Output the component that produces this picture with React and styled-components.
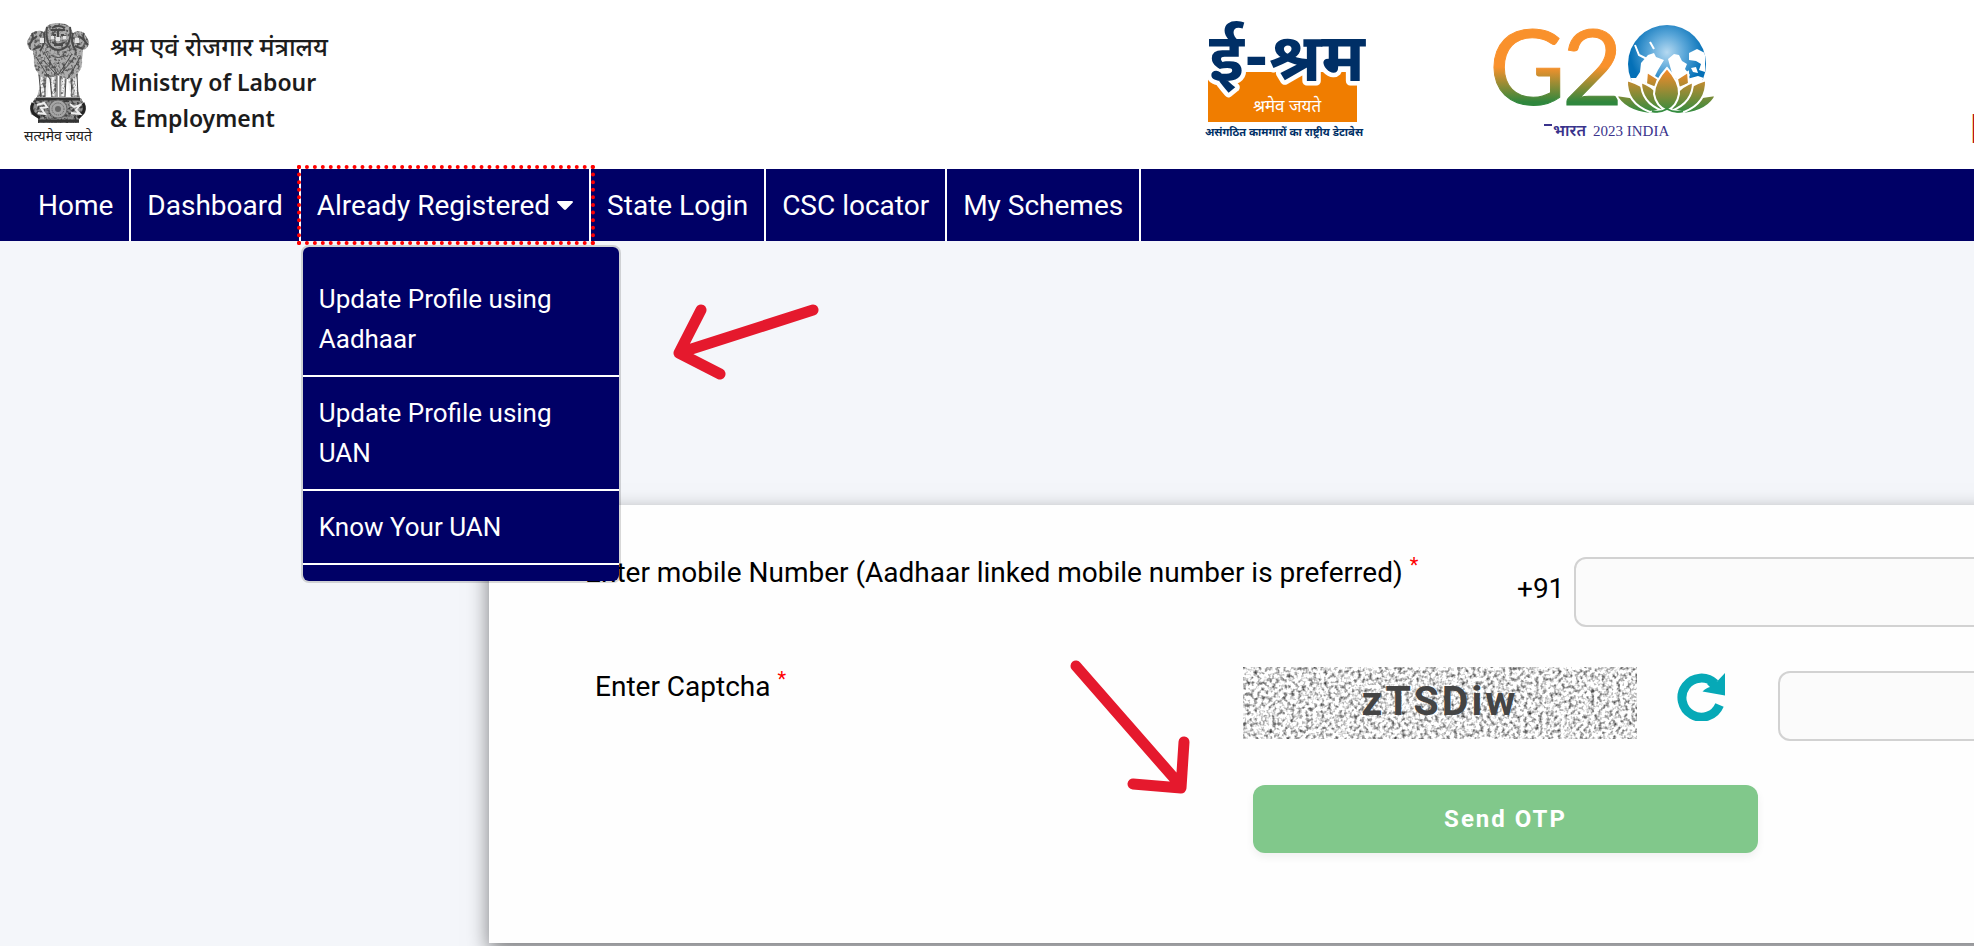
import React, { useState } from "react";
import styled, { createGlobalStyle } from "styled-components";

const App = () => {
	const [mobile, setMobile] = useState("");
	const [captcha, setCaptcha] = useState("");

	return (
		<Page>
			<GlobalStyle />
			<Header>
				<Brand>
					<Emblem />
					<BrandText>
						<BrandHindi lang="hi">श्रम एवं रोजगार मंत्रालय</BrandHindi>
						<BrandName>Ministry of Labour</BrandName>
						<BrandName>& Employment</BrandName>
					</BrandText>
				</Brand>
				<Logos>
					<EShramLogo />
					<G20Logo />
				</Logos>
				<NextLogo />
			</Header>

			<Nav>
				<NavItem>
					<NavLink href="#home">Home</NavLink>
				</NavItem>
				<NavItem>
					<NavLink href="#dashboard">Dashboard</NavLink>
				</NavItem>
				<NavItem $focused>
					<NavLink href="#registered">
						Already Registered
						<Caret viewBox="0 0 16 9" aria-hidden="true">
							<path d="M1.2 0h13.6c1 0 1.5 1.1.8 1.8L9 8.5c-.6.6-1.4.6-2 0L.4 1.8C-.3 1.1.2 0 1.2 0z" />
						</Caret>
					</NavLink>
					<Menu>
						<MenuLink href="#aadhaar">Update Profile using Aadhaar</MenuLink>
						<MenuLink href="#uan">Update Profile using UAN</MenuLink>
						<MenuLink href="#know">Know Your UAN</MenuLink>
					</Menu>
				</NavItem>
				<NavItem>
					<NavLink href="#state">State Login</NavLink>
				</NavItem>
				<NavItem>
					<NavLink href="#csc">CSC locator</NavLink>
				</NavItem>
				<NavItem>
					<NavLink href="#schemes">My Schemes</NavLink>
				</NavItem>
			</Nav>

			<Card onSubmit={(e) => e.preventDefault()}>
				<MobileRow>
					<Label htmlFor="mobile">
						Enter mobile Number (Aadhaar linked mobile number is preferred){" "}
						<Required>*</Required>
					</Label>
					<Prefix>+91</Prefix>
					<Input
						id="mobile"
						type="tel"
						value={mobile}
						onChange={(e) => setMobile(e.target.value)}
					/>
				</MobileRow>
				<CaptchaRow>
					<Label htmlFor="captcha">
						Enter Captcha <Required>*</Required>
					</Label>
					<CaptchaImage>
						<Noise />
						<CaptchaText>zTSDiw</CaptchaText>
					</CaptchaImage>
					<RefreshButton type="button" aria-label="Refresh captcha">
						<svg viewBox="0 0 48 48" width="48" height="48">
							<path
								d="M42.500 32A19.500 19.500 0 1 1 38 10.600"
								fill="none"
								stroke="#06a9b7"
								strokeWidth="9"
							/>
							<path
								d="M48 0V22.500L25.500 18.500C28 16 31 14.500 33 14L30 11L38 7.500L40 8.500Z"
								fill="#06a9b7"
							/>
						</svg>
					</RefreshButton>
					<Input
						id="captcha"
						type="text"
						value={captcha}
						onChange={(e) => setCaptcha(e.target.value)}
					/>
				</CaptchaRow>
				<SendButton type="submit">Send OTP</SendButton>
			</Card>

			<MenuArrow viewBox="0 0 160 90" aria-hidden="true">
				<path d="M141 18L7 61M29 18L7 61L48 82" />
			</MenuArrow>
			<ButtonArrow viewBox="0 0 130 150" aria-hidden="true">
				<path d="M16 16L121 136M124 92L121 138L73 134" />
			</ButtonArrow>
		</Page>
	);
};

export default App;

const Emblem = () => (
	<LogoSvg width="70" height="121" viewBox="0 0 70 121" aria-hidden="true">
		<defs>
			<filter id="grain" x="0" y="0" width="100%" height="100%">
				<feTurbulence type="fractalNoise" baseFrequency="0.35" numOctaves="2" seed="4" />
				<feColorMatrix values="0 0 0 0 0  0 0 0 0 0  0 0 0 0 0  4 0 0 0 -1.800" />
				<feComposite in2="SourceGraphic" operator="in" />
			</filter>
			<path
				id="lions"
				d="M24 3Q28 0 35 0Q43 0 47 4L50 10Q55 6 61 10L66 18Q66 26 60 27L59 36Q60 44 55 50L52 60L57 74H48L45 54L43 56L42 74H38L37 53H34L33 74H28L27 56L24 54L22 74H14L18 60L15 50Q10 44 11 36L10 28Q4 26 4 18L9 10Q15 6 21 9Z"
			/>
			<path
				id="abacus"
				d="M12 75H58L60 79Q64 84 62 90L56 95V100H15V95L8 91Q6 84 10 79Z"
			/>
		</defs>
		<use href="#lions" fill="#adadad" />
		<path
			d="M18 54L20 72M25 56L23 73M30 54V73M40 54V73M46 55L49 73M51 54L53 72"
			stroke="#f3f3f3"
			strokeWidth="3"
		/>
		<use href="#lions" fill="#000" filter="url(#grain)" opacity="0.5" />
		<g fill="none" stroke="#4a4a4a">
			<path
				d="M24 4Q22 15 27 23Q35 31 44 23Q49 14 47 4M28 7H42M29 5Q35 1 42 5M30 12H33M38 12H41M35 8V17M29 19Q35 24 42 19M31 22H40"
				strokeWidth="2"
			/>
			<path
				d="M21 10Q23 20 17 28M9 10Q12 15 6 22M14 13L8 18M11 26L18 23M50 10Q47 20 53 28M61 10Q58 15 65 22M56 13L62 18M60 26L52 23"
				strokeWidth="2"
			/>
			<path d="M13 34Q23 50 27 56M57 34Q49 50 44 56M22 31Q29 42 35 52Q42 42 49 31M20 37L31 49M50 37L39 49M28 32Q35 37 43 32" />
			<path d="M16 52L18 74M22 55V74M27 56L29 74M34 53V74M37 53V74M43 56L42 74M48 55L49 74M54 51L55 74" />
		</g>
		<path
			d="M33 14h4v4h-4zM28 13h3v3h-3zM40 13h3v3h-3zM17 15h4v5h-4zM52 15h4v5h-4z"
			fill="#e6e6e6"
		/>
		<use href="#abacus" fill="#909090" />
		<use href="#abacus" fill="#000" filter="url(#grain)" opacity="0.6" />
		<path d="M13 76H57M15 98H56" stroke="#333" strokeWidth="3" />
		<path
			d="M10 80Q7 86 11 91L17 95M60 80Q63 86 59 91L55 95"
			fill="none"
			stroke="#222"
			strokeWidth="3"
		/>
		<path
			d="M14 82L21 80L24 84L18 85L22 91L15 90M47 81L51 84L57 82L53 87L57 91L48 90"
			fill="none"
			stroke="#eee"
			strokeWidth="2"
		/>
		<circle cx="35" cy="86" r="9" fill="#a5a5a5" stroke="#666" />
		<circle cx="35" cy="86" r="6" fill="none" stroke="#555" strokeDasharray="1 1" />
		<circle cx="35" cy="86" r="3" fill="#666" />
		<text x="35" y="118" textAnchor="middle" fontSize="14" fill="#222">
			सत्यमेव जयते
		</text>
	</LogoSvg>
);

const EShramLogo = () => (
	<LogoSvg width="158" height="122" viewBox="0 0 158 122" aria-hidden="true">
		<rect y="54" width="149" height="50" fill="#f07d00" />
		<text
			x="1"
			y="63"
			fontSize="67"
			fontWeight="700"
			fill="#002f66"
			stroke="#fff"
			strokeWidth="9"
			strokeLinejoin="round"
			paintOrder="stroke"
		>
			ई-श्रम
		</text>
		<text x="79" y="94" textAnchor="middle" fontSize="17" fill="#fff">
			श्रमेव जयते
		</text>
		<text x="76" y="118" textAnchor="middle" fontSize="11" fontWeight="700" fill="#002f66">
			असंगठित कामगारों का राष्ट्रीय डेटाबेस
		</text>
	</LogoSvg>
);

const G20Logo = () => (
	<LogoSvg width="224" height="122" viewBox="0 0 224 122" aria-hidden="true">
		<defs>
			<linearGradient
				id="tricolor"
				gradientUnits="userSpaceOnUse"
				x1="0"
				y1="10"
				x2="0"
				y2="88"
			>
				<stop offset="0.5" stopColor="#f9912c" />
				<stop offset="0.950" stopColor="#2f873d" />
			</linearGradient>
			<linearGradient id="petal" gradientUnits="userSpaceOnUse" x1="0" y1="48" x2="0" y2="94">
				<stop offset="0.100" stopColor="#f58a2b" />
				<stop offset="1" stopColor="#348c3f" />
			</linearGradient>
			<radialGradient id="ocean" cx="0.5" cy="0.350" r="0.5">
				<stop offset="0" stopColor="#b5d9f1" />
				<stop offset="0.450" stopColor="#5ba7d9" />
				<stop offset="0.950" stopColor="#0470b7" />
			</radialGradient>
			<clipPath id="globe">
				<circle cx="175" cy="46" r="39" />
			</clipPath>
		</defs>
		<g
			fontFamily="Lato, sans-serif"
			fontSize="105"
			fill="url(#tricolor)"
			stroke="url(#tricolor)"
			strokeWidth="1"
		>
			<text x="-3" y="87">
				G
			</text>
			<text x="70" y="87">
				2
			</text>
		</g>
		<circle cx="175" cy="46" r="39" fill="url(#ocean)" />
		<g clipPath="url(#globe)" fill="#fff">
			<path d="M134 60L144 60L148 54L149 45L156 37L162 35L164 39L172 42L169 47L166 52L162 60L154 63L150 76H134Z" />
			<path d="M176 41L182 36L187 37L190 43L195 46L193 51L198 57L192 64L181 59Z" />
			<path d="M197 35L205 31L213 35V54L207 52L209 46L204 43L197 42ZM199 50L204 49L206 55L201 54ZM195 61L206 58L215 61L213 76H198Z" />
			<path d="M143 27L147 37L155 41" fill="none" stroke="#fff" strokeWidth="2" />
			<path d="M158 24L162 31" stroke="#fff" strokeWidth="2" />
		</g>
		<g fill="url(#petal)" stroke="#fff" strokeWidth="2">
			<path d="M155 54L166 61L164 70L154 66Z" />
			<path d="M196 54L185 61L187 70L197 66Z" />
			<path d="M124 77Q132 93 158 96Q167 96 170 93Q153 80 124 77Z" />
			<path d="M224 77Q217 93 191 96Q182 96 179 93Q195 80 224 77Z" />
			<path d="M135 62Q134 85 158 94L170 92Q165 72 135 62Z" />
			<path d="M214 62Q215 85 192 94L180 92Q184 72 214 62Z" />
			<path d="M149 64Q149 85 171 93Q171 72 149 64Z" />
			<path d="M201 64Q201 85 179 93Q179 72 201 64Z" />
			<path d="M175 50Q188 64 187 76Q185 88 175 93Q164 88 162 76Q162 64 175 50Z" />
		</g>
		<path d="M160 93Q168 95 175 91Q182 95 191 93" fill="none" stroke="#348c3f" strokeWidth="2" />
		<g fill="#39338c">
			<path d="M52 106h8v2h-8z" />
			<text x="61" y="118" fontSize="16" fontWeight="600">
				भारत
			</text>
			<text x="101" y="118" fontSize="15" fontFamily='"Liberation Serif", serif'>
				2023 INDIA
			</text>
		</g>
	</LogoSvg>
);

const Noise = () => (
	<NoiseSvg aria-hidden="true">
		<filter
			id="noise"
			x="0"
			y="0"
			width="100%"
			height="100%"
			colorInterpolationFilters="sRGB"
		>
			<feTurbulence type="fractalNoise" baseFrequency="0.27" numOctaves="2" seed="9" />
			<feColorMatrix values="1.700 0 0 0 0.040  1.700 0 0 0 0.040  1.700 0 0 0 0.040  0 0 0 0 1" />
		</filter>
		<rect width="100%" height="100%" filter="url(#noise)" />
	</NoiseSvg>
);

const GlobalStyle = createGlobalStyle`
	* {
		box-sizing: border-box;
	}

	body {
		margin: 0;
		background: #f4f6fa;
		color: #000;
		font-family: Roboto, sans-serif;
		font-size: 28px;
	}
`;

const Page = styled.div`
	position: relative;
	min-height: 100vh;
	overflow: hidden;
`;

const Header = styled.header`
	display: flex;
	align-items: flex-start;
	height: 169px;
	padding-left: 23px;
	background: #fff;
`;

const Brand = styled.div`
	display: flex;
	flex: 1;
	gap: 17px;
	padding-top: 23px;
`;

const BrandText = styled.div`
	display: flex;
	flex-direction: column;
	padding-top: 5px;
	color: #1c1c1c;
	font-family: "Noto Sans", "Noto Sans Devanagari", sans-serif;
	line-height: 36px;
`;

const BrandHindi = styled.span`
	font-size: 25px;
	font-weight: 500;
`;

const BrandName = styled.span`
	font-size: 23px;
	font-weight: 600;
`;

const LogoSvg = styled.svg`
	overflow: visible;
	font-family: "Noto Sans Devanagari", "Noto Sans", sans-serif;
`;

const Logos = styled.div`
	display: flex;
	gap: 126px;
	margin-right: 256px;
	padding-top: 18px;
`;

/* only the edge of the following banner shows */
const NextLogo = styled.div`
	width: 2px;
	height: 29px;
	margin-top: 114px;
	border-left: 1px solid #f3d27a;
	background: #c0141c;
`;

const Nav = styled.nav`
	position: relative;
	z-index: 1;
	display: flex;
	height: 72px;
	padding-left: 22px;
	background: #000066;
`;

const NavItem = styled.div`
	position: relative;
	border-right: 2px solid #fff;
	outline: ${({ $focused }) => ($focused ? "4px dotted red" : "none")};
	z-index: ${({ $focused }) => ($focused ? 1 : 0)};
`;

const NavLink = styled.a`
	display: flex;
	align-items: center;
	gap: 7px;
	height: 100%;
	padding: 0 16px;
	color: #fff;
	text-decoration: none;
	white-space: nowrap;
`;

const Caret = styled.svg`
	width: 16px;
	height: 9px;
	fill: #fff;
`;

const Menu = styled.div`
	position: absolute;
	top: 76px;
	left: 0;
	width: 320px;
	padding: 16px 0;
	border: 2px solid rgba(0, 0, 0, 0.15);
	border-radius: 8px;
	background: #000066;
	background-clip: padding-box;
`;

const MenuLink = styled.a`
	display: block;
	padding: 16px;
	border-bottom: 2px solid #fff;
	color: #fff;
	font-size: 26px;
	line-height: 40px;
	text-decoration: none;
`;

const Card = styled.form`
	display: flex;
	flex-direction: column;
	gap: 44px;
	margin: 264px -60px 0 489px;
	padding: 52px 0 90px;
	background: #fefefe;
	box-shadow: 0 8px 20px rgba(0, 0, 0, 0.5);
`;

const Row = styled.div`
	display: grid;
	align-items: start;
`;

const MobileRow = styled(Row)`
	grid-template-columns: 932px 57px 1fr;
	padding-left: 96px;
`;

const CaptchaRow = styled(Row)`
	grid-template-columns: 648px 434px 101px 1fr;
	padding-left: 106px;
`;

const Label = styled.label`
	line-height: 32px;
	white-space: nowrap;
`;

const Required = styled.sup`
	color: #f00;
	font-size: 20px;
	line-height: 0;
`;

const Prefix = styled.span`
	padding-top: 16px;
	line-height: 32px;
`;

const Input = styled.input`
	width: 100%;
	height: 70px;
	padding: 0 16px;
	border: 2px solid #d2d2d2;
	border-radius: 12px;
	background: #fbfbfb;
	font: inherit;
`;

const CaptchaImage = styled.div`
	position: relative;
	width: 394px;
	height: 72px;
	margin-top: -4px;
	text-align: center;
`;

const NoiseSvg = styled.svg`
	position: absolute;
	inset: 0;
	width: 100%;
	height: 100%;
`;

const CaptchaText = styled.span`
	position: relative;
	color: #444;
	font-size: 41px;
	font-weight: 700;
	letter-spacing: 3px;
	line-height: 68px;
`;

const RefreshButton = styled.button`
	width: 48px;
	height: 48px;
	margin-top: 2px;
	padding: 0;
	border: none;
	background: none;
	cursor: pointer;
`;

const SendButton = styled.button`
	width: 505px;
	height: 68px;
	margin-left: 764px;
	border: none;
	border-radius: 12px;
	background: #81c88b;
	box-shadow: 0 4px 8px rgba(0, 0, 0, 0.06);
	color: #fff;
	font-family: inherit;
	font-size: 24px;
	font-weight: 700;
	letter-spacing: 2px;
	cursor: pointer;
`;

const Arrow = styled.svg`
	position: absolute;
	z-index: 2;
	fill: none;
	stroke: #e5192d;
	stroke-width: 11px;
	stroke-linecap: round;
	stroke-linejoin: round;
	pointer-events: none;
`;

const MenuArrow = styled(Arrow)`
	top: 292px;
	left: 672px;
	width: 160px;
	height: 90px;
`;

const ButtonArrow = styled(Arrow)`
	top: 650px;
	left: 1060px;
	width: 130px;
	height: 150px;
`;
